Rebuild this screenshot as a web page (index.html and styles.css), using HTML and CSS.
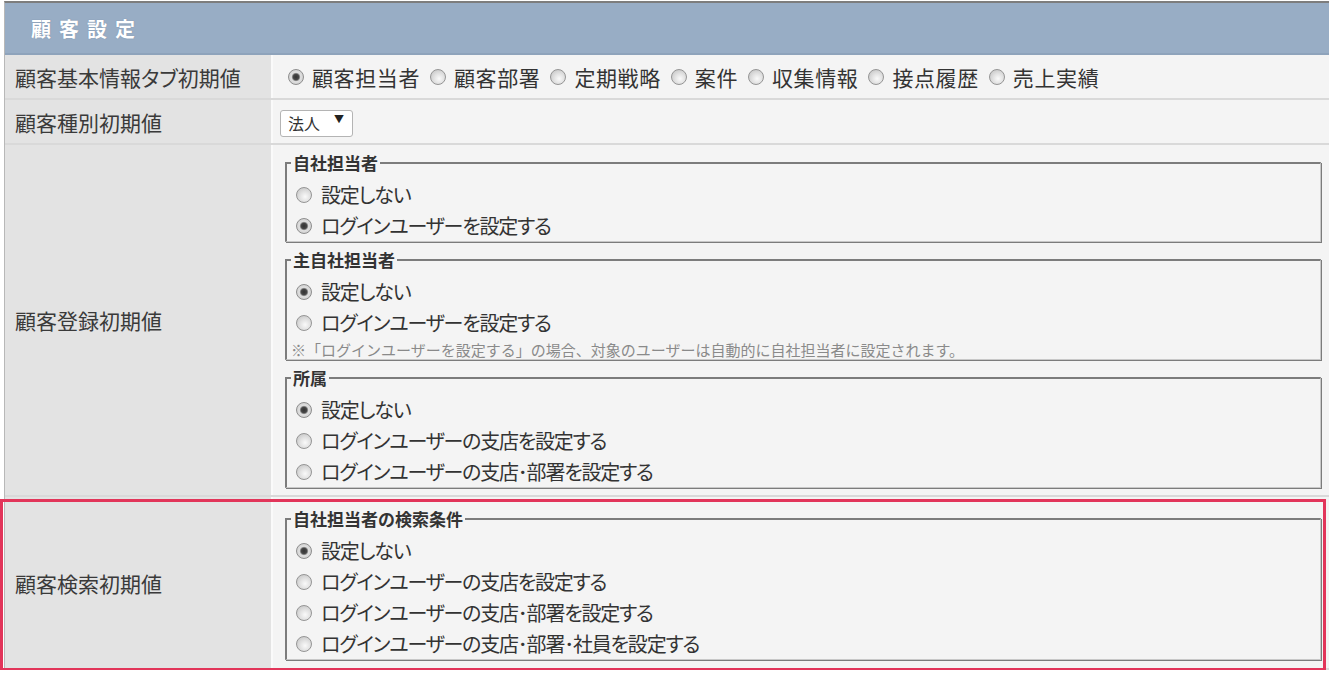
FILE: index.html
```html
<!DOCTYPE html>
<html lang="ja">
<head>
<meta charset="utf-8">
<title>顧客設定</title>
<link rel="stylesheet" href="styles.css">
</head>
<body>
<div class="panel">
  <div class="panel-head">顧客設定</div>

  <div class="row row-short">
    <div class="label">顧客基本情報タブ初期値</div>
    <div class="value inline-opts">
      <label class="opt"><input type="radio" name="tab" checked><span>顧客担当者</span></label>
      <label class="opt"><input type="radio" name="tab"><span>顧客部署</span></label>
      <label class="opt"><input type="radio" name="tab"><span>定期戦略</span></label>
      <label class="opt"><input type="radio" name="tab"><span>案件</span></label>
      <label class="opt"><input type="radio" name="tab"><span>収集情報</span></label>
      <label class="opt"><input type="radio" name="tab"><span>接点履歴</span></label>
      <label class="opt"><input type="radio" name="tab"><span>売上実績</span></label>
    </div>
  </div>

  <div class="row row-short">
    <div class="label">顧客種別初期値</div>
    <div class="value select-cell">
      <span class="select-box"><select class="select"><option>法人</option><option>個人</option></select></span>
    </div>
  </div>

  <div class="row">
    <div class="label">顧客登録初期値</div>
    <div class="value groups">
      <fieldset class="group">
        <legend>自社担当者</legend>
        <label class="opt line"><input type="radio" name="g1"><span>設定しない</span></label>
        <label class="opt line"><input type="radio" name="g1" checked><span>ログインユーザーを設定する</span></label>
      </fieldset>
      <fieldset class="group">
        <legend>主自社担当者</legend>
        <label class="opt line"><input type="radio" name="g2" checked><span>設定しない</span></label>
        <label class="opt line"><input type="radio" name="g2"><span>ログインユーザーを設定する</span></label>
        <p class="note">※「ログインユーザーを設定する」の場合、対象のユーザーは自動的に自社担当者に設定されます。</p>
      </fieldset>
      <fieldset class="group">
        <legend>所属</legend>
        <label class="opt line"><input type="radio" name="g3" checked><span>設定しない</span></label>
        <label class="opt line"><input type="radio" name="g3"><span>ログインユーザーの支店を設定する</span></label>
        <label class="opt line"><input type="radio" name="g3"><span>ログインユーザーの支店･部署を設定する</span></label>
      </fieldset>
    </div>
  </div>

  <div class="row row-last">
    <div class="label">顧客検索初期値</div>
    <div class="value groups groups-last">
      <fieldset class="group">
        <legend>自社担当者の検索条件</legend>
        <label class="opt line"><input type="radio" name="g4" checked><span>設定しない</span></label>
        <label class="opt line"><input type="radio" name="g4"><span>ログインユーザーの支店を設定する</span></label>
        <label class="opt line"><input type="radio" name="g4"><span>ログインユーザーの支店･部署を設定する</span></label>
        <label class="opt line"><input type="radio" name="g4"><span>ログインユーザーの支店･部署･社員を設定する</span></label>
      </fieldset>
    </div>
    <div class="highlight"></div>
  </div>
</div>
</body>
</html>
```

FILE: styles.css
```css
html, body {
  margin: 0;
  padding: 0;
  background: #ffffff;
}

body {
  padding: 1px 0 0 4px;
  font-family: "Noto Sans CJK JP", "Noto Sans", sans-serif;
  color: #333333;
  overflow: hidden;
}

.panel {
  border-top: 2px solid #7d7d7d;
  border-left: 1px solid #b8b8b8;
}

.panel-head {
  height: 50px;
  background: #98adc5;
  border-bottom: 2px solid #8ea3bb;
  display: flex;
  align-items: center;
  padding-left: 26px;
  color: #ffffff;
  font-size: 20px;
  font-weight: bold;
  letter-spacing: 8px;
  text-shadow: 0 0 1px rgba(80, 100, 130, 0.6);
}

.row {
  display: grid;
  grid-template-columns: 268px 1fr;
  border-bottom: 2px solid #d9d9d9;
}

.row-short {
  height: 43px;
}

.label {
  background: #e3e3e3;
  border-right: 2px solid #fafafa;
  display: flex;
  align-items: center;
  padding-left: 10px;
  font-size: 21px;
  font-feature-settings: "palt";
  color: #3a3a3a;
}

.value {
  background: #f4f4f4;
  font-size: 21px;
  color: #333333;
}

.inline-opts {
  display: flex;
  align-items: center;
  padding-left: 15px;
  gap: 10px;
  letter-spacing: 0.6px;
}

.inline-opts .opt {
  gap: 8px;
}

.opt {
  display: flex;
  align-items: center;
  gap: 9px;
  white-space: nowrap;
}

.opt input {
  -webkit-appearance: none;
  appearance: none;
  box-sizing: border-box;
  margin: 0;
  width: 16px;
  height: 16px;
  border-radius: 50%;
  border: 1px solid #959595;
  background: radial-gradient(circle at 58% 62%, #fafafa 0%, #e2e2e2 42%, #bdbdbd 100%);
  flex: none;
}

.opt input:checked {
  background: radial-gradient(circle, #333333 0, #474747 2.8px, #858585 3.6px, #e0e0e0 4.6px, #c4c4c4 100%);
  border-color: #8e8e8e;
}

.select-cell {
  display: flex;
  align-items: center;
  padding-left: 7px;
}

.select-box {
  position: relative;
  display: inline-block;
}

.select-box::after {
  content: "▼";
  position: absolute;
  right: 9px;
  top: 6px;
  font-size: 10px;
  line-height: 14px;
  color: #222;
  pointer-events: none;
}

.select {
  -webkit-appearance: none;
  appearance: none;
  width: 73px;
  height: 27px;
  margin: 0;
  padding: 0 0 0 7px;
  border: 1px solid #b4b4b4;
  border-radius: 3px;
  background: #ffffff;
  font-family: "Noto Sans CJK JP", sans-serif;
  font-size: 16px;
  color: #333;
}

.groups {
  display: flex;
  flex-direction: column;
  gap: 8px;
  padding: 8px 8px 7px 12px;
}

.groups-last {
  padding-top: 12px;
  padding-bottom: 8px;
}

.group {
  margin: 0;
  padding: 6px 10px 0 4px;
  border-color: #7c7c7c #c8c8c8 #c8c8c8 #7c7c7c;
  border-style: solid;
  border-width: 2px 1px 1px 2px;
  box-shadow: 1px 1px 0 #7c7c7c;
  min-width: 0;
}

.group legend {
  padding: 0 2px;
  font-size: 17px;
  font-weight: bold;
  line-height: 20px;
  color: #333;
}

.line {
  height: 31px;
  padding-left: 5px;
  font-size: 20px;
  letter-spacing: -1.2px;
  font-feature-settings: "palt";
}

.note {
  margin: 0;
  padding-top: 3px;
  font-size: 15px;
  line-height: 18px;
  color: #8a8a8a;
}

.row-last {
  position: relative;
}

.highlight {
  position: absolute;
  left: -5px;
  top: 2px;
  right: 3px;
  bottom: -3px;
  border: 3px solid #e2355a;
  pointer-events: none;
}
```
